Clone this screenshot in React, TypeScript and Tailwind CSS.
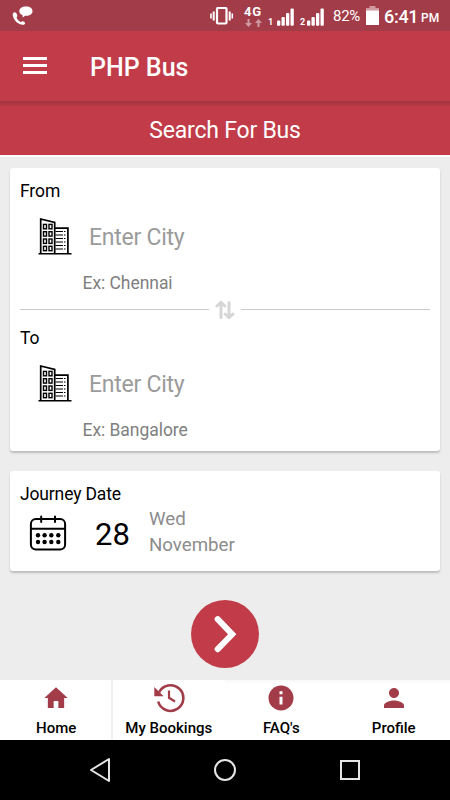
import React from 'react';

type IconProps = { className?: string };

const ROBOTO = "font-['Roboto','Noto_Sans',sans-serif]";

function CallIcon() {
    return (
        <svg width="22" height="20" viewBox="0 0 22 20" fill="#fff">
            <path d="M14 0.600c-4.200 0-6.700 1.900-6.700 4.600 0 1.700 1.200 3.100 3.200 3.900l0.200 2.300 2.400-1.700c4.800 0.300 7.400-1.700 7.400-4.500 0-2.700-2.300-4.600-6.500-4.600z" />
            <path d="M2.600 6.200c-1.500 0.100-2.200 1.700-1.700 3.700 1.200 4.500 4.900 8.300 9.700 8.800 1.500 0.200 2.600-0.500 2.500-1.500-0.100-1.300-2.300-2.400-3.300-1.800l-1 0.800c-1.800-0.800-3.500-2.700-4.300-4.600l0.700-1c0.600-1.200-0.800-4.500-2.600-4.400z" />
        </svg>
    );
}

function VibrateIcon() {
    return (
        <svg width="24" height="18" viewBox="0 0 24 18" fill="none" stroke="#fff">
            <rect x="7" y="1" width="9.500" height="15.500" rx="1" strokeWidth="2.200" />
            <path d="M3.700 4.500v9M19.700 4.500v9" strokeWidth="2" />
            <path d="M1 6.500v5M22.300 6.500v5" strokeWidth="1.600" />
        </svg>
    );
}

function SignalIcon() {
    return (
        <svg width="17" height="18" viewBox="0 0 17 18" fill="#fff">
            <rect x="0" y="12.500" width="3.300" height="5.300" rx="1" />
            <rect x="4.500" y="9" width="3.300" height="8.800" rx="1" />
            <rect x="9" y="5" width="3.300" height="12.800" rx="1" />
            <rect x="13.500" y="0.500" width="3.300" height="17.300" rx="1" />
        </svg>
    );
}

function CityIcon() {
    return (
        <svg width="34" height="38" viewBox="0 0 34 38" fill="none" stroke="#000">
            <path d="M2.700 36.300V2l14 3.500v30.800M16.700 11.200h13.200v25.100" strokeWidth="1.700" />
            <path d="M0.500 36.800h33" strokeWidth="1.500" />
            {[7.400, 14.700, 22, 29.300].map(y => (
                <g key={y} strokeWidth="1.400">
                    <rect x="5.500" y={y} width="3" height="4.400" />
                    <rect x="11" y={y} width="3" height="4.400" />
                </g>
            ))}
            {[14.500, 18, 21.500, 25, 28.500, 32].map(y => (
                <path key={y} d={`M17.500 ${y}h7.500M26 ${y}h1.500`} strokeWidth="1.200" />
            ))}
        </svg>
    );
}

function SwapIcon() {
    return (
        <svg width="20" height="20" viewBox="0 0 20 20" fill="none" stroke="#d6d6d6" strokeWidth="3" strokeLinecap="round" strokeLinejoin="round">
            <path d="M6 17.500V2.500M2 6l4-3.700L9.800 6" />
            <path d="M14 2.500v15M10.200 14l3.800 3.700L18 14" />
        </svg>
    );
}

function CalendarIcon() {
    return (
        <svg width="38" height="36" viewBox="0 0 38 36" fill="none" stroke="#000">
            <rect x="1.900" y="4" width="34.200" height="30.500" rx="5" strokeWidth="2" />
            <path d="M2 13.800h34" strokeWidth="2" />
            <path d="M12.200 1.500v5.500M26 1.500v5.500" strokeWidth="2" strokeLinecap="round" />
            {[20.200, 27].map(y =>
                [9, 15.600, 22.300, 29.300].map(x => (
                    <circle key={`${x}-${y}`} cx={x} cy={y} r="2.200" fill="#000" stroke="none" />
                ))
            )}
        </svg>
    );
}

function HomeIcon({ className }: IconProps) {
    return (
        <svg width="28" height="28" viewBox="0 0 24 24" fill="currentColor" className={className}>
            <path d="M10 20.500v-6h4v6h5v-8.500h3L12 2.700 2 12h3v8.500z" />
        </svg>
    );
}

function HistoryIcon({ className }: IconProps) {
    return (
        <svg width="34" height="30" viewBox="0 0 34 30" fill="none" stroke="currentColor" className={className}>
            <path d="M7 9.500A12.800 12.800 0 1 1 6.200 18.500" strokeWidth="2.600" />
            <path d="M2.300 4v9.300h9.300z" fill="currentColor" stroke="none" />
            <path d="M17 7.500v7.300l6 3.700" strokeWidth="2.200" />
        </svg>
    );
}

function InfoIcon({ className }: IconProps) {
    return (
        <svg width="26" height="26" viewBox="0 0 26 26" className={className}>
            <circle cx="13" cy="13" r="12.500" fill="currentColor" />
            <path d="M11.500 6.300h3v3h-3zM11.500 11.800h3v7.700h-3z" fill="#fff" />
        </svg>
    );
}

function ProfileIcon({ className }: IconProps) {
    return (
        <svg width="30" height="30" viewBox="0 0 24 24" fill="currentColor" className={className}>
            <path d="M12 12c2.210 0 4-1.790 4-4s-1.790-4-4-4-4 1.790-4 4 1.790 4 4 4zm0 2c-2.670 0-8 1.340-8 4v2h16v-2c0-2.660-5.330-4-8-4z" />
        </svg>
    );
}

function StatusBar() {
    return (
        <div className="flex h-[31px] items-start bg-[#a23c49] text-white">
            <div className="ml-3 mt-[6px]"><CallIcon /></div>
            <div className="ml-[176px] mt-[7px]"><VibrateIcon /></div>
            <div className="ml-[10px] mt-[5px] flex w-[18px] flex-col items-center">
                <span className="text-[13px] font-bold leading-[14px] tracking-[0.8px]">4G</span>
                <svg width="17" height="8" viewBox="0 0 17 8" fill="#cf9aa1">
                    <path d="M2.500 0h2v4H7L3.500 8 0 4h2.500zM12.500 8h2V4H17l-3.500-4L10 4h2.500z" />
                </svg>
            </div>
            <span className="ml-[6px] mt-[16px] w-[6px] text-[9px] font-bold leading-3">1</span>
            <div className="ml-[3px] mt-[8px]"><SignalIcon /></div>
            <span className="ml-[6px] mt-[16px] w-[6px] text-[9px] font-bold leading-3">2</span>
            <div className="ml-[1px] mt-[8px]"><SignalIcon /></div>
            <span className="ml-[9px] mt-[6px] w-[27px] whitespace-nowrap text-[15px] leading-5 tracking-[-0.3px]">82%</span>
            <svg className="ml-[6px] mt-[6px]" width="13" height="19" viewBox="0 0 13 19">
                <path d="M3.500 0h6v2H13v4H0V2h3.500z" fill="#d0989f" />
                <path d="M0 4.500h13V19H0z" fill="#fff" />
            </svg>
            <span className="ml-[5px] mt-[6px] w-[34px] whitespace-nowrap text-[18px] font-medium leading-[22px] tracking-[-0.3px]">6:41</span>
            <span className="ml-[3px] mt-[9px] text-[12px] font-medium leading-[18px]">PM</span>
        </div>
    );
}

function CityField({ label, hint }: { label: string; hint: string }) {
    return (
        <div className="pl-[10px]">
            <div className="h-[26px] pt-px text-[17.500px] leading-[26px] tracking-[-0.1px] text-black">{label}</div>
            <div className="flex h-[67px] items-center">
                <div className="mb-[2px] ml-[17.500px] w-[51.500px]"><CityIcon /></div>
                <span className="mt-[3px] text-[23px] tracking-[-0.250px] text-[#9b9b9b]">Enter City</span>
            </div>
            <div className="h-[26px] pl-[62.500px] text-[17.500px] leading-[26px] tracking-[-0.050px] text-[#808080]">{hint}</div>
        </div>
    );
}

const tabs = [
    { label: 'Home', Icon: HomeIcon, cell: 'border-r-2 border-[#f0f0f0] pl-[2px]' },
    { label: 'My Bookings', Icon: HistoryIcon, cell: '' },
    { label: "FAQ's", Icon: InfoIcon, cell: 'bg-linear-to-b from-[#f8f8f8] to-white to-[4px]' },
    { label: 'Profile', Icon: ProfileIcon, cell: 'bg-linear-to-b from-[#f8f8f8] to-white to-[4px]' },
];

export default function App() {
    return (
        <div className={`flex h-[800px] w-[450px] flex-col overflow-hidden bg-[#ededed] ${ROBOTO}`}>
            <StatusBar />
            <header className="flex h-[70px] items-center bg-[#c13c48] text-white">
                <button className="ml-[23px] mt-[-1px] flex w-6 flex-col gap-[4px]">
                    <span className="h-[3px] bg-white" />
                    <span className="h-[3px] bg-white" />
                    <span className="h-[3px] bg-white" />
                </button>
                <h1 className="ml-[43px] mt-[4px] text-[25px] font-medium">PHP Bus</h1>
            </header>
            <div className="h-[56px] border-b-2 border-white bg-[#c13c48]">
                <div className="h-[6px] bg-linear-to-b from-[#9c333d] to-[#c13c48]" />
                <div className="text-center text-[23px] leading-[48px] tracking-[-0.200px] text-white">Search For Bus</div>
            </div>

            <section className="mx-[10px] mt-[11px] h-[283px] rounded-[3px] bg-white pt-[9px] shadow-[0_2px_2px_#bdbdbd]">
                <CityField label="From" hint="Ex: Chennai" />
                <div className="flex h-[28px] items-center px-[10px] pb-[1px]">
                    <div className="h-px flex-1 bg-[#cacaca]" />
                    <div className="mx-[6px]"><SwapIcon /></div>
                    <div className="h-px flex-1 bg-[#cacaca]" />
                </div>
                <CityField label="To" hint="Ex: Bangalore" />
            </section>

            <section className="mx-[10px] mt-[20px] h-[100px] rounded-[3px] bg-white pl-[10px] pt-[10px] shadow-[0_2px_2px_#bdbdbd]">
                <div className="text-[17.500px] leading-[26px] tracking-[-0.150px] text-black">Journey Date</div>
                <div className="flex items-start">
                    <div className="ml-[9px] mt-[8px]"><CalendarIcon /></div>
                    <div className="ml-[28px] mt-[9px] w-[54px] text-[31px] leading-[38px] text-black">28</div>
                    <div className="text-[18.700px] leading-[25.500px] text-[#8c8c8c]">
                        <div>Wed</div>
                        <div>November</div>
                    </div>
                </div>
            </section>

            <div className="mt-[29px] flex justify-center">
                <button className="flex h-[68px] w-[68px] items-center justify-center rounded-full bg-[#c13c48]">
                    <svg width="24" height="40" viewBox="0 0 24 40" fill="none" stroke="#fff" strokeWidth="6" strokeLinecap="round">
                        <path d="M4.700 5.200L19.200 20.300 4.700 35.200" />
                    </svg>
                </button>
            </div>

            <nav className="mt-[12px] grid h-[60px] grid-cols-4 bg-white">
                {tabs.map(({ label, Icon, cell }) => (
                    <div key={label} className={`flex flex-col items-center ${cell}`}>
                        <div className="flex h-[35px] items-center justify-center text-[#a23c49]">
                            <Icon />
                        </div>
                        <span className="whitespace-nowrap text-[15px] font-medium leading-[26px] text-black">{label}</span>
                    </div>
                ))}
            </nav>

            <div className="flex h-[60px] items-center justify-center bg-black">
                <svg width="272" height="26" viewBox="0 0 272 26" fill="none" stroke="#e6e6e6" strokeWidth="2">
                    <path d="M20 2v22L2 13z" strokeLinejoin="round" />
                    <circle cx="136" cy="13" r="10" />
                    <rect x="252" y="4" width="18" height="18" />
                </svg>
            </div>
        </div>
    );
}
